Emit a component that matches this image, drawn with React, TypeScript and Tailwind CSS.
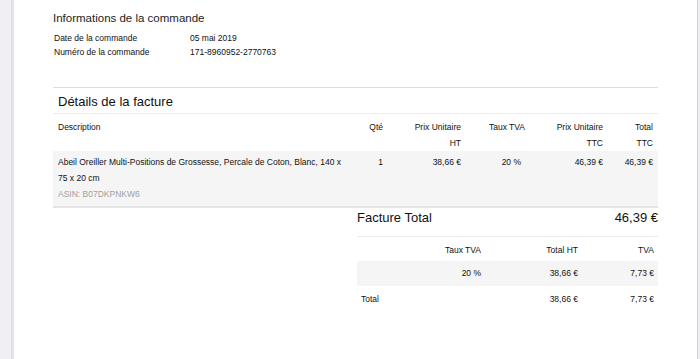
const font = { fontFamily: '"Liberation Sans", Arial, Helvetica, sans-serif' }

type Line = {
  description: string
  asin: string
  qty: number
  unitHt: string
  rate: string
  unitTtc: string
  totalTtc: string
}

const order = {
  date: '05 mai 2019',
  number: '171-8960952-2770763',
}

const lines: Line[] = [
  {
    description: 'Abeil Oreiller Multi-Positions de Grossesse, Percale de Coton, Blanc, 140 x 75 x 20 cm',
    asin: 'ASIN: B07DKPNKW6',
    qty: 1,
    unitHt: '38,66 €',
    rate: '20 %',
    unitTtc: '46,39 €',
    totalTtc: '46,39 €',
  },
]

function OrderInfo() {
  return (
    <section className="pt-[10px]">
      <h2 className="text-[11.5px] leading-[16px] text-[#1c1c1c]">Informations de la commande</h2>
      <div className="mt-[5px] text-[8.5px] leading-[14px] text-[#111]">
        <div className="flex">
          <span className="w-[137px] pl-px">Date de la commande</span>
          <span>{order.date}</span>
        </div>
        <div className="flex">
          <span className="w-[137px] pl-px">Numéro de la commande</span>
          <span>{order.number}</span>
        </div>
      </div>
    </section>
  )
}

function InvoiceDetails() {
  return (
    <section className="mt-[28px] w-[605px] border-t border-[#dcdcdc]">
      <h2 className="border-b border-[#ececec] pl-[5px] pt-[6px] pb-[3px] text-[13px] leading-[16px] text-[#111]">
        Détails de la facture
      </h2>
      <div className="flex pt-[5px] text-[8.5px] leading-[16px] text-[#111]">
        <div className="w-[295px] pl-[5px]">Description</div>
        <div className="w-[35px] text-right">Qté</div>
        <div className="w-[78px] text-right">Prix Unitaire<br />HT</div>
        <div className="w-[64px] text-right">Taux TVA</div>
        <div className="w-[78px] text-right">Prix Unitaire<br />TTC</div>
        <div className="w-[50px] text-right">Total<br />TTC</div>
      </div>
      {lines.map((l) => (
        <div
          key={l.asin}
          className="flex border-b-2 border-[#e4e4e4] bg-[#f5f5f5] pt-[3px] pb-[4px] text-[8.5px] leading-[16px] text-[#111]"
        >
          <div className="w-[295px] pl-[5px]">
            <div>{l.description}</div>
            <div className="text-[#a0a0a0]">{l.asin}</div>
          </div>
          <div className="w-[35px] text-right">{l.qty}</div>
          <div className="w-[78px] text-right">{l.unitHt}</div>
          <div className="w-[64px] pr-[4px] text-right">{l.rate}</div>
          <div className="w-[78px] text-right">{l.unitTtc}</div>
          <div className="w-[50px] text-right">{l.totalTtc}</div>
        </div>
      ))}
    </section>
  )
}

function InvoiceTotal() {
  return (
    <section className="ml-[304px] w-[301px]">
      <div className="flex justify-between border-b border-[#ececec] pt-[2px] pb-[10px] text-[13px] leading-[16px] text-[#111]">
        <span>Facture Total</span>
        <span>46,39 €</span>
      </div>
      <div className="text-[8.5px] text-[#111]">
        <div className="flex h-[24px] items-center pt-[3px] pr-[4px]">
          <div className="w-[124px] text-right">Taux TVA</div>
          <div className="w-[97px] text-right">Total HT</div>
          <div className="w-[76px] text-right">TVA</div>
        </div>
        <div className="flex h-[25px] items-center bg-[#f5f5f5] pr-[4px]">
          <div className="w-[124px] text-right">20 %</div>
          <div className="w-[97px] text-right">38,66 €</div>
          <div className="w-[76px] text-right">7,73 €</div>
        </div>
        <div className="flex h-[26px] items-center pr-[4px]">
          <div className="w-[124px] pl-[4px]">Total</div>
          <div className="w-[97px] text-right">38,66 €</div>
          <div className="w-[76px] text-right">7,73 €</div>
        </div>
      </div>
    </section>
  )
}

export default function App() {
  return (
    <div className="flex h-[359px] w-[700px] overflow-hidden bg-white" style={font}>
      <div className="w-[11px] bg-[#efeff4]" />
      <div className="w-[3px] bg-gradient-to-r from-[#dcdce2] to-[#e8e8ec]" />
      <main className="flex-1 pl-[39px]">
        <OrderInfo />
        <InvoiceDetails />
        <InvoiceTotal />
      </main>
      <div className="w-px bg-[#d4d4d8]" />
      <div className="w-[2px] bg-[#efeff4]" />
    </div>
  )
}
